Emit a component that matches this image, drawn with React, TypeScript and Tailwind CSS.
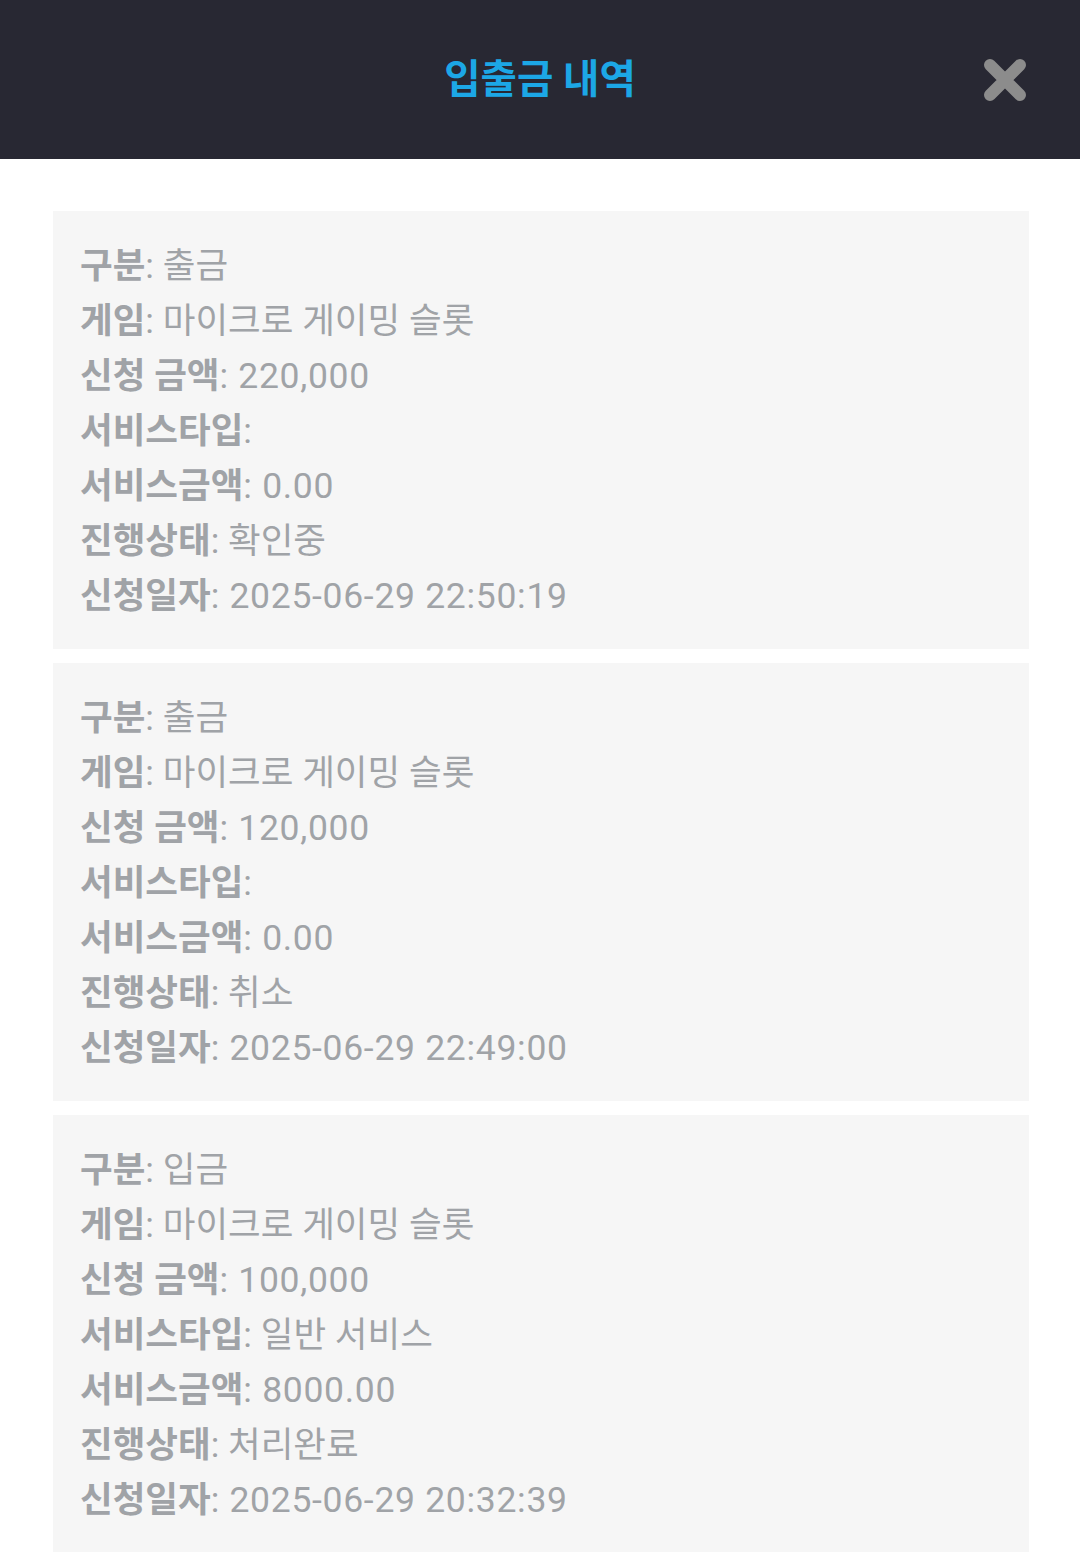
const rows = [
  {
    type: "출금",
    game: "마이크로 게이밍 슬롯",
    amount: "220,000",
    serviceType: "",
    serviceAmount: "0.00",
    status: "확인중",
    date: "2025-06-29 22:50:19",
  },
  {
    type: "출금",
    game: "마이크로 게이밍 슬롯",
    amount: "120,000",
    serviceType: "",
    serviceAmount: "0.00",
    status: "취소",
    date: "2025-06-29 22:49:00",
  },
  {
    type: "입금",
    game: "마이크로 게이밍 슬롯",
    amount: "100,000",
    serviceType: "일반 서비스",
    serviceAmount: "8000.00",
    status: "처리완료",
    date: "2025-06-29 20:32:39",
  },
];

function Line({ label, value, num }: { label: string; value: string; num?: boolean }) {
  return (
    <div className="h-[55px] leading-[55px] whitespace-nowrap">
      <span className="font-bold">{label}</span>
      <span className={num ? "tracking-[0.7px]" : ""}>: {value}</span>
    </div>
  );
}

export default function App() {
  return (
    <div className="min-h-[1552px] bg-white font-['Roboto','Noto_Sans_CJK_KR',sans-serif]">
      <header className="relative flex h-[159px] items-center justify-center bg-[#282833]">
        <h1 className="text-[39.5px] font-bold text-[#1ca7e6]">입출금 내역</h1>
        <button className="absolute right-[52px] top-[57px] h-[46px] w-[46px]">
          <svg viewBox="0 0 46 46" className="h-full w-full">
            <path d="M8 8 L38 38 M38 8 L8 38" stroke="#8c8c8c" strokeWidth="12" strokeLinecap="round" />
          </svg>
        </button>
      </header>
      <main className="flex flex-col gap-[14px] pl-[53px] pr-[51px] pt-[52px]">
        {rows.map((r, i) => (
          <section key={i} className="bg-[#f6f6f6] pl-[27px] pr-[27px] pt-[28px] pb-[25px] text-[35.5px] text-[#a0a3a7]">
            <Line label="구분" value={r.type} />
            <Line label="게임" value={r.game} />
            <Line label="신청 금액" value={r.amount} num />
            <Line label="서비스타입" value={r.serviceType} />
            <Line label="서비스금액" value={r.serviceAmount} num />
            <Line label="진행상태" value={r.status} />
            <Line label="신청일자" value={r.date} num />
          </section>
        ))}
      </main>
    </div>
  );
}
